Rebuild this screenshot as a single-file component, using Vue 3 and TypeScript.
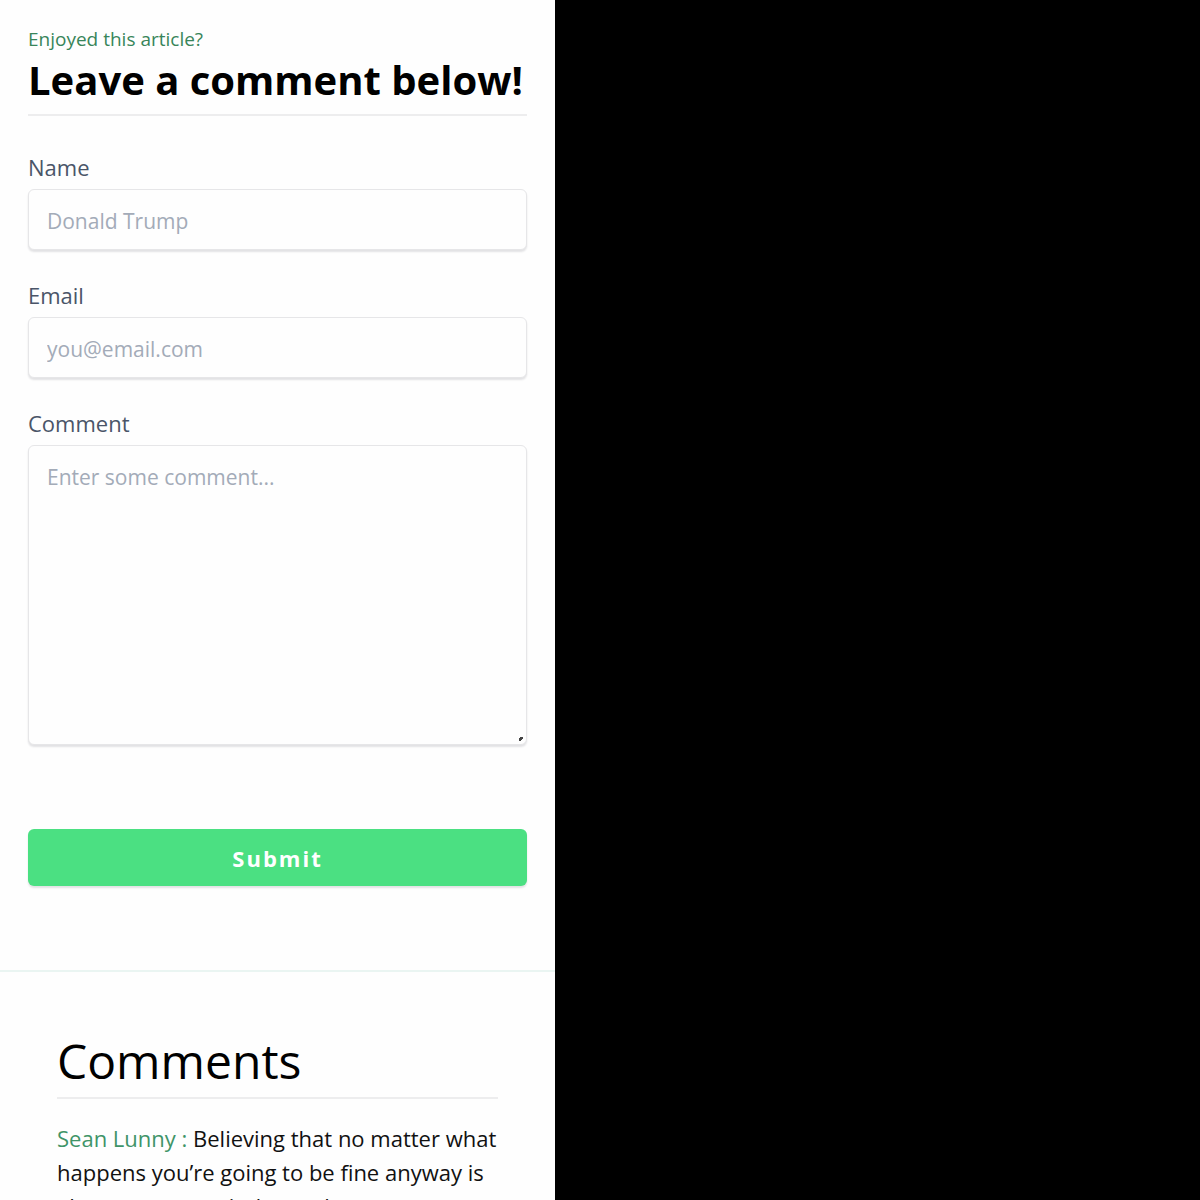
<script setup lang="ts">
import { reactive } from 'vue'

interface Comment {
  author: string
  text: string
}

const form = reactive({ name: '', email: '', comment: '' })

const comments = reactive<Comment[]>([
  {
    author: 'Sean Lunny',
    text: 'Believing that no matter what happens you’re going to be fine anyway is always a great mindset to have',
  },
])

function submit(): void {
  if (!form.name || !form.comment) return
  comments.push({ author: form.name, text: form.comment })
  form.name = ''
  form.email = ''
  form.comment = ''
}
</script>

<template>
  <main class="page">
    <form class="comment-form" novalidate @submit.prevent="submit">
      <header class="intro">
        <p class="kicker">Enjoyed this article?</p>
        <h1 class="title">Leave a comment below!</h1>
      </header>
      <label class="field">
        <span class="label">Name</span>
        <input v-model="form.name" class="control" type="text" placeholder="Donald Trump" />
      </label>
      <label class="field">
        <span class="label">Email</span>
        <input v-model="form.email" class="control" type="email" placeholder="you@email.com" />
      </label>
      <label class="field">
        <span class="label">Comment</span>
        <span class="area">
          <textarea v-model="form.comment" class="control" placeholder="Enter some comment..."></textarea>
          <i class="grip"></i>
        </span>
      </label>
      <button class="submit" type="submit">Submit</button>
    </form>
    <section class="comments">
      <h2 class="comments-title">Comments</h2>
      <p v-for="(item, i) in comments" :key="i" class="comment">
        <span class="author">{{ item.author }} :</span> {{ item.text }}
      </p>
    </section>
  </main>
</template>

<style>
body {
  background: #000;
}
</style>

<style scoped>
.page {
  box-sizing: border-box;
  width: 46.25%;
  height: 100vh;
  overflow: hidden;
  background: #fefefe;
  color: #000;
  font-family: "Segoe UI", "Open Sans", "Noto Sans", sans-serif;
  font-size: 22px;
  line-height: 34px;
}
.comment-form {
  padding: 24px 28px 84px;
  border-bottom: 2px solid #eaf5f2;
}
.intro {
  margin-bottom: 36px;
  padding-bottom: 8px;
  border-bottom: 2px solid #ededee;
}
.kicker {
  margin: 0;
  color: #38855a;
  font-size: 19px;
  line-height: 30px;
}
.title {
  margin: 0;
  font-size: 40px;
  font-weight: 700;
  line-height: 52px;
  white-space: nowrap;
}
.field {
  display: block;
  margin-bottom: 30px;
}
.label {
  display: block;
  margin-bottom: 7px;
  color: #4a5568;
  line-height: 30px;
}
.control {
  display: block;
  box-sizing: border-box;
  width: 100%;
  height: 61px;
  margin: 0;
  padding: 14px 18px 12px;
  border: 1px solid #e6e6e8;
  border-radius: 6px;
  background: #fefefe;
  box-shadow: 0 2px 2px #e2e2e4;
  color: #4a5568;
  font: inherit;
  font-size: 21px;
  outline: none;
}
.control::placeholder {
  color: #a3abb8;
  opacity: 1;
}
.area {
  display: block;
  position: relative;
}
textarea.control {
  height: 300px;
  resize: none;
}
.grip {
  position: absolute;
  right: 4px;
  bottom: 4px;
  width: 4px;
  height: 4px;
  background: linear-gradient(135deg, transparent 25%, #444 25%, #444 75%, transparent 75%);
}
.submit {
  display: block;
  width: 100%;
  height: 57px;
  margin-top: 84px;
  padding: 0;
  border: 0;
  border-radius: 6px;
  background: #4be082;
  box-shadow: 0 2px 2px #e2e2e4;
  color: #fff;
  font: inherit;
  font-weight: 700;
  letter-spacing: 2px;
}
.comments {
  padding: 57px 57px 0;
}
.comments-title {
  margin: 0 0 22px;
  padding-bottom: 4px;
  border-bottom: 2px solid #ededee;
  font-size: 48px;
  font-weight: 400;
  line-height: 64px;
}
.comment {
  margin: 0;
  color: #111;
}
.author {
  color: #3f9468;
}
</style>
